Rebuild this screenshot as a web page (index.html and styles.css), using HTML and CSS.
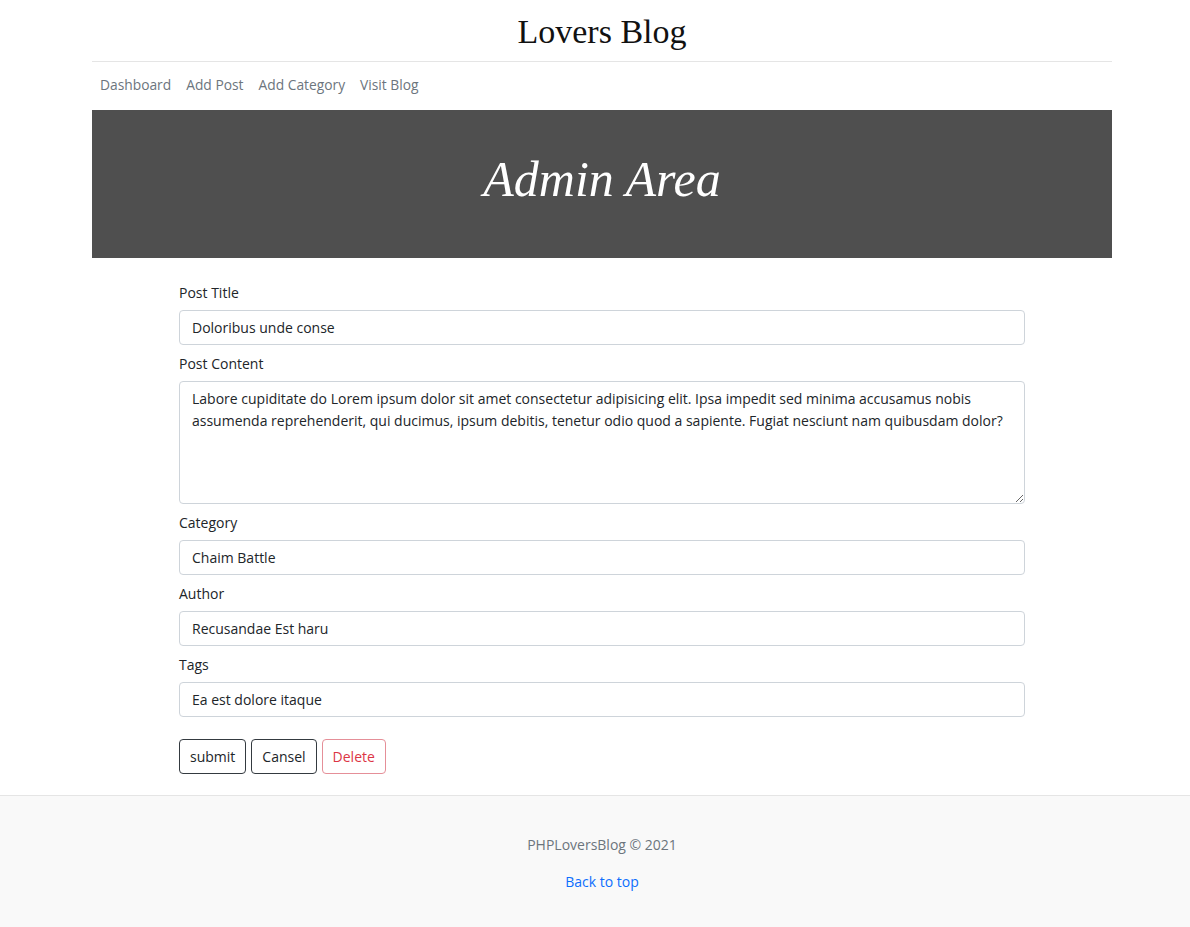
FILE: index.html
```html
<!DOCTYPE html>
<html lang="en">
<head>
<meta charset="utf-8">
<title>Lovers Blog - Admin</title>
<link rel="stylesheet" href="styles.css">
</head>
<body>
<div class="page">
  <div class="container">
    <header class="site-header">
      <h1 class="site-title">Lovers Blog</h1>
    </header>
    <nav class="nav">
      <a href="#">Dashboard</a>
      <a href="#">Add Post</a>
      <a href="#">Add Category</a>
      <a href="#">Visit Blog</a>
    </nav>
    <div class="banner">
      <h2 class="banner-title">Admin Area</h2>
    </div>
    <form class="post-form">
      <label class="form-label">Post Title</label>
      <input class="form-control" type="text" value="Doloribus unde conse">
      <label class="form-label">Post Content</label>
      <textarea class="form-control textarea">Labore cupiditate do Lorem ipsum dolor sit amet consectetur adipisicing elit. Ipsa impedit sed minima accusamus nobis assumenda reprehenderit, qui ducimus, ipsum debitis, tenetur odio quod a sapiente. Fugiat nesciunt nam quibusdam dolor?</textarea>
      <label class="form-label">Category</label>
      <input class="form-control" type="text" value="Chaim Battle">
      <label class="form-label">Author</label>
      <input class="form-control" type="text" value="Recusandae Est haru">
      <label class="form-label">Tags</label>
      <input class="form-control" type="text" value="Ea est dolore itaque">
      <div class="actions">
        <button type="button" class="btn btn-dark">submit</button>
        <button type="button" class="btn btn-dark">Cansel</button>
        <button type="button" class="btn btn-danger">Delete</button>
      </div>
    </form>
  </div>
  <footer class="footer">
    <p class="copy">PHPLoversBlog © 2021</p>
    <p><a href="#" class="top-link">Back to top</a></p>
  </footer>
</div>
</body>
</html>
```

FILE: styles.css
```css
* { box-sizing: border-box; }
html, body { margin: 0; padding: 0; }
html { overflow: hidden; }
body {
  font-family: "Open Sans", "Noto Sans", sans-serif;
  font-size: 14px;
  color: #212529;
  background: #fff;
}
.page {
  width: 1204px;
}
.container {
  width: 1020px;
  margin: 0 auto;
}
.site-header {
  height: 62px;
  border-bottom: 1px solid #e5e5e5;
  display: flex;
  align-items: center;
  justify-content: center;
}
.site-title {
  margin: 0;
  font-family: "Liberation Serif", "Times New Roman", serif;
  font-weight: 400;
  font-size: 34px;
  line-height: 1;
  color: #111;
  padding-top: 2px;
}
.nav {
  display: flex;
  gap: 15px;
  padding: 0 8px 4px;
  height: 48px;
  align-items: center;
}
.nav a {
  color: #6c757d;
  text-decoration: none;
  font-size: 13.8px;
}
.banner {
  background: #4f4f4f;
  height: 148px;
  display: flex;
  align-items: center;
  justify-content: center;
  padding-bottom: 10px;
}
.banner-title {
  margin: 0;
  font-family: "Liberation Serif", "Times New Roman", serif;
  font-style: italic;
  font-weight: 400;
  font-size: 50px;
  color: #fff;
}
.post-form {
  width: 846px;
  margin: 0 auto;
  padding: 24px 0 21px;
  display: flex;
  flex-direction: column;
}
.form-label {
  display: block;
  line-height: 21px;
  margin-bottom: 7px;
  color: #212529;
}
.form-control {
  display: block;
  width: 100%;
  height: 35px;
  padding: 6px 12px;
  font-family: inherit;
  font-size: 14px;
  color: #212529;
  border: 1px solid #ced4da;
  border-radius: 4px;
  background: #fff;
  margin: 0 0 8px;
}
.textarea {
  height: 123px;
  line-height: 22px;
  padding: 6px 11px 6px 12px;
  resize: vertical;
}
.actions {
  display: flex;
  gap: 5px;
  margin-top: 14px;
}
.btn {
  height: 35px;
  padding: 0 10px;
  font-family: inherit;
  font-size: 14px;
  background: #fff;
  border-radius: 4px;
  cursor: pointer;
}
.btn-dark {
  color: #212529;
  border: 1px solid #343a40;
}
.btn-danger {
  color: #dc3545;
  border: 1px solid #e58f98;
}
.footer {
  background: #f9f9f9;
  border-top: 1px solid #e5e5e5;
  height: 140px;
  text-align: center;
  padding-top: 38px;
}
.footer p {
  margin: 0 0 16px;
  line-height: 21px;
}
.copy { color: #6c757d; }
.top-link {
  color: #0d6efd;
  text-decoration: none;
}
```
